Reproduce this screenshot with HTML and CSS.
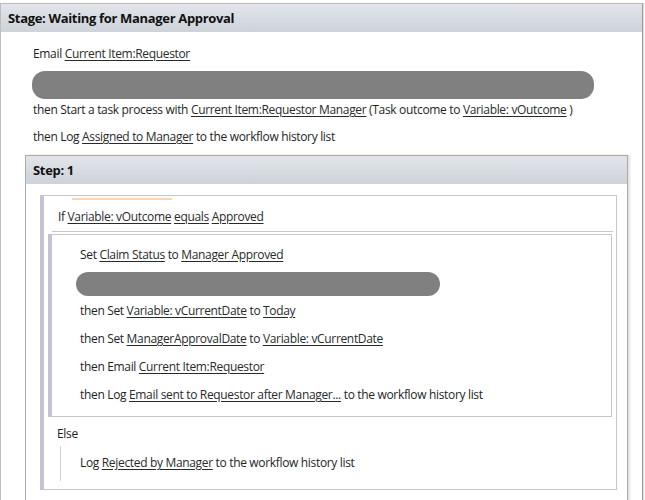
FILE: index.html
```html
<!DOCTYPE html>
<html>
<head>
<meta charset="utf-8">
<link rel="stylesheet" href="styles.css">
</head>
<body>
<div class="stage">
  <div class="stage-head">Stage: Waiting for Manager Approval</div>
  <div class="stage-body">
    <div class="line email-line">Email <a>Current Item:Requestor</a></div>
    <div class="pill pill-stage"></div>
    <div class="line task-line">then Start a task process with <a>Current Item:Requestor Manager</a> (Task outcome to <a>Variable: vOutcome</a> )</div>
    <div class="line log-line">then Log <a>Assigned to Manager</a> to the workflow history list</div>
    <div class="step">
      <div class="step-head">Step: 1</div>
      <div class="step-body">
        <div class="cond">
          <span class="marker"></span>
          <div class="line if-line">If <a>Variable: vOutcome</a> <a>equals</a> <a>Approved</a></div>
          <div class="divider"></div>
          <div class="then">
            <div class="line first">Set <a>Claim Status</a> to <a>Manager Approved</a></div>
            <div class="pill pill-then"></div>
            <div class="line next">then Set <a>Variable: vCurrentDate</a> to <a>Today</a></div>
            <div class="line next">then Set <a>ManagerApprovalDate</a> to <a>Variable: vCurrentDate</a></div>
            <div class="line next">then Email <a>Current Item:Requestor</a></div>
            <div class="line next">then Log <a>Email sent to Requestor after Manager...</a> to the workflow history list</div>
          </div>
          <div class="line else-label">Else</div>
          <div class="else-branch">
            <div class="line">Log <a>Rejected by Manager</a> to the workflow history list</div>
          </div>
        </div>
      </div>
    </div>
  </div>
</div>
</body>
</html>
```
FILE: styles.css
```css
html, body {
  margin: 0;
  padding: 0;
  height: 500px;
  overflow: hidden;
  background: #ffffff;
}
body {
  font-family: "Open Sans", "Noto Sans", sans-serif;
  font-size: 12px;
  letter-spacing: -0.33px;
  color: #1e1e1e;
}
a {
  color: #2a2a2a;
  text-decoration: underline;
  text-underline-offset: 2px;
}
.line {
  height: 18px;
  line-height: 18px;
  white-space: nowrap;
}
.stage {
  box-sizing: border-box;
  width: 643px;
  margin-top: 3px;
  border: 1px solid #bdbdbd;
  border-right-color: #9a9a9a;
  border-bottom: none;
  height: 520px;
  box-shadow: 1px 0 1px rgba(0,0,0,0.12);
}
.stage-head {
  height: 28px;
  line-height: 28px;
  padding-left: 7px;
  font-weight: bold;
  font-size: 13px;
  color: #111;
  background: linear-gradient(#e2e6eb, #d5dae0 60%, #cdd3da);
}
.stage-body {
  padding: 13px 14px 0 24px;
}
.email-line, .task-line, .log-line {
  margin-left: 8px;
}
.pill {
  background: #808080;
}
.pill-stage {
  margin: 8px 0 0 7px;
  width: 562px;
  height: 28px;
  border-radius: 13px;
}
.task-line {
  margin-top: 2px;
}
.log-line {
  margin-top: 9px;
  margin-bottom: 9px;
}
.step {
  border: 1px solid #ababab;
  border-bottom: none;
  height: 400px;
  box-shadow: 2px 0 2px rgba(0,0,0,0.12);
}
.step-head {
  height: 28px;
  line-height: 29px;
  padding-left: 7px;
  font-weight: bold;
  font-size: 13px;
  color: #111;
  background: linear-gradient(#e2e6eb, #d5dae0 60%, #cdd3da);
}
.step-body {
  padding: 11px 10px 10px 14px;
}
.cond {
  position: relative;
  border: 1px solid #c6c6c6;
  border-left: 4px solid #c3c3d4;
  padding-bottom: 8px;
}
.marker {
  position: absolute;
  left: 28px;
  top: 2px;
  width: 100px;
  height: 2px;
  background: #fad5b0;
}
.if-line {
  margin: 12px 0 0 14px;
}
.divider {
  height: 1px;
  background: #c8c8c8;
  margin: 5px 3px 0 8px;
}
.then {
  margin: 2px 4px 0 4px;
  border: 1px solid #c6c6c6;
  border-left: 4px solid #c3c3d4;
  padding: 11px 0 12px 0;
}
.then .line {
  margin-left: 28px;
}
.pill-then {
  margin: 8px 0 0 24px;
  width: 364px;
  height: 24px;
  border-radius: 12px;
}
.then .next {
  margin-top: 10px;
}
.then .pill-then + .next {
  margin-top: 6px;
}
.else-label {
  margin: 8px 0 0 13px;
}
.else-branch {
  margin: 3px 0 0 16px;
  border-left: 1px solid #d2d2d2;
  padding: 8px 0 9px 19px;
}
```
